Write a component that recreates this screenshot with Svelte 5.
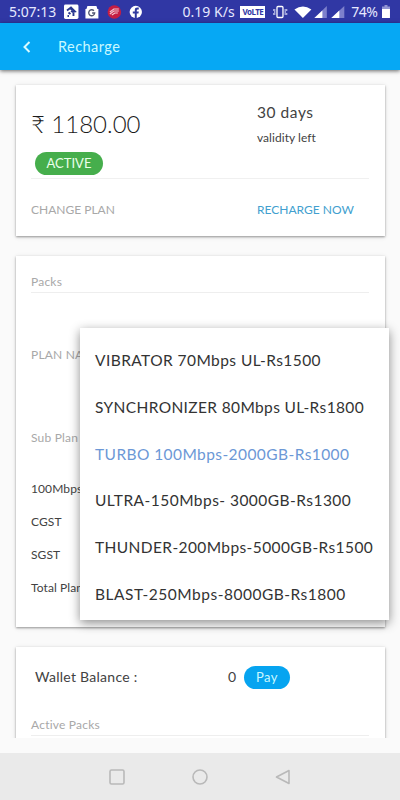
<script lang="ts">
	const plans = [
		{ name: 'VIBRATOR 70Mbps UL-Rs1500', spacing: 0.43 },
		{ name: 'SYNCHRONIZER 80Mbps UL-Rs1800', spacing: 0.36 },
		{ name: 'TURBO 100Mbps-2000GB-Rs1000', spacing: 0.42 },
		{ name: 'ULTRA-150Mbps- 3000GB-Rs1300', spacing: 0.46 },
		{ name: 'THUNDER-200Mbps-5000GB-Rs1500', spacing: 0.39 },
		{ name: 'BLAST-250Mbps-8000GB-Rs1800', spacing: 0.5 }
	];
	const charges = ['100Mbps', 'CGST', 'SGST', 'Total Plan'];

	let selected = $state(2);
</script>

<div class="screen">
	<div class="status-bar">
		<span class="clock">5:07:13</span>
		<svg class="tray" width="84" height="16" viewBox="0 0 84 16">
			<rect x="1" y="0.500" width="14.500" height="14.500" rx="1.500" fill="#fff" />
			<path d="M4 6.500l4-3 4 4-2 .5-2-1M7 4.500l4 2M5.500 8.500l2 1.500M10.500 9v3M4.500 12h1.500" fill="none" stroke="#28368f" stroke-width="1.900" />
			<path d="M24.500 2h9l1 3h1v9.500h-13V5h1z" fill="#fff" />
			<path d="M31 6.700A3 3 0 1 0 31.800 9H29.200" fill="none" stroke="#4f5470" stroke-width="1.300" />
			<circle cx="51.500" cy="8" r="6.800" fill="#c51d43" />
			<path d="M47 8l4-3h5M47 10l4-3h5M49 11l3-2h3" fill="none" stroke="#f4c7d2" stroke-width="1.200" />
			<circle cx="73" cy="8" r="6.200" fill="#fff" />
			<path d="M72 15V9.500h-2V7.500h2V6q0-2.500 2.500-2.500h1.500v2h-1q-1 0-1 1v1h2l-.3 2H74V15z" fill="#303a9e" />
		</svg>
		<span class="speed">0.19 K/s</span>
		<span class="volte">VoLTE</span>
		<svg class="signals" width="74" height="16" viewBox="0 0 74 16">
			<rect x="4" y="2.500" width="6" height="11" rx="1" fill="none" stroke="#fff" stroke-width="1.300" />
			<path d="M1.800 5v6M12.200 5v6M.2 5v2M.2 9v2M13.800 5v2M13.800 9v2" stroke="#d5d8f5" stroke-width="1" />
			<path d="M21.500 5.500Q30-.5 38.500 5.500L30 14z" fill="#fff" />
			<path d="M41.500 14L54 2v12z" fill="#7d80cc" />
			<path d="M41.500 14L49.500 6.500V14z" fill="#fff" />
			<path d="M58.500 14L71.500 2v12z" fill="#7d80cc" />
			<path d="M58.500 14L66.500 6.500V14z" fill="#fff" />
		</svg>
		<span class="percent">74%</span>
		<svg class="battery" width="8" height="14" viewBox="0 0 8 14">
			<path d="M2.500 0h3v1.500H8V5H0V1.500h2.500z" fill="#9295d4" />
			<path d="M0 4h8v9H0z" fill="#fff" />
		</svg>
	</div>

	<header class="app-bar">
		<svg width="10" height="14" viewBox="0 0 10 14">
			<path d="M7.500 2L2.500 7l5 5" fill="none" stroke="#d9fbff" stroke-width="2" />
		</svg>
		<h1>Recharge</h1>
	</header>

	<main>
		<section class="card balance">
			<div class="summary">
				<div>
					<div class="amount">₹ 1180.00</div>
					<span class="badge">ACTIVE</span>
				</div>
				<div>
					<div class="days">30 days</div>
					<div class="validity">validity left</div>
				</div>
			</div>
			<div class="actions">
				<button class="change">CHANGE PLAN</button>
				<button class="recharge">RECHARGE NOW</button>
			</div>
		</section>

		<section class="card packs">
			<h2 class="section-title">Packs</h2>
			<div class="field plan-name">PLAN NAME</div>
			<div class="field sub-plan">Sub Plan</div>
			<div class="charges">
				{#each charges as charge}
					<div>{charge}</div>
				{/each}
			</div>

			<div class="menu">
				{#each plans as plan, i}
					<button
						class:selected={i === selected}
						style="letter-spacing: {plan.spacing}px"
						onclick={() => (selected = i)}
					>
						{plan.name}
					</button>
				{/each}
			</div>
		</section>

		<section class="card wallet">
			<div class="wallet-row">
				<span class="wallet-label">Wallet Balance :</span>
				<span class="wallet-value">0</span>
				<button class="pay">Pay</button>
			</div>
			<h2 class="section-title">Active Packs</h2>
		</section>
	</main>

	<nav>
		<svg width="16" height="16" viewBox="0 0 16 16">
			<rect x="1" y="1" width="14" height="14" rx="1.500" />
		</svg>
		<svg width="16" height="16" viewBox="0 0 16 16">
			<circle cx="8" cy="8" r="7" />
		</svg>
		<svg width="16" height="16" viewBox="0 0 16 16">
			<path d="M14 1.500v13L1.500 8z" />
		</svg>
	</nav>
</div>

<style>
	:global(body) {
		margin: 0;
	}

	.screen {
		width: 400px;
		height: 800px;
		display: flex;
		flex-direction: column;
		overflow: hidden;
		background: #fafafa;
		color: #424242;
		font-family: Lato, 'Noto Sans', sans-serif;
	}

	button {
		padding: 0;
		border: none;
		background: none;
		font: inherit;
		color: inherit;
		text-align: left;
		white-space: nowrap;
	}

	h1,
	h2 {
		margin: 0;
		font-weight: 400;
	}

	.status-bar {
		flex: none;
		height: 23px;
		padding: 0 10px 0 9px;
		display: flex;
		align-items: center;
		background: #3037a4;
		color: #e6e8ff;
		font: 14px/24px 'Noto Sans', sans-serif;
		white-space: nowrap;
	}

	.clock {
		width: 54px;
		letter-spacing: -0.05px;
	}

	.tray {
		margin-right: 36px;
	}

	.speed {
		width: 58px;
	}

	.volte {
		width: 25px;
		height: 12px;
		background: #fff;
		color: #3037a4;
		font: 700 8px/12px 'Noto Sans', sans-serif;
		letter-spacing: -0.5px;
		text-align: center;
	}

	.signals {
		margin: 0 4px 0 8px;
	}

	.percent {
		width: 31px;
		letter-spacing: -0.4px;
	}

	.app-bar {
		position: relative;
		flex: none;
		height: 47px;
		padding-left: 22px;
		display: flex;
		align-items: center;
		gap: 26px;
		background: #06a8f4;
		box-shadow: 0 1px 4px rgba(0, 0, 0, 0.6);
	}

	.app-bar h1 {
		color: #c9f8ff;
		font-size: 14.5px;
		letter-spacing: 0.45px;
	}

	main {
		height: 668px;
		flex: none;
		box-sizing: border-box;
		padding: 15px 15px 0 16px;
		display: flex;
		flex-direction: column;
		gap: 20px;
		overflow: hidden;
	}

	.card {
		flex: none;
		box-sizing: border-box;
		padding: 0 16px 0 15px;
		background: #fff;
		box-shadow:
			0 1px 2px rgba(0, 0, 0, 0.35),
			0 1px 5px rgba(0, 0, 0, 0.12);
	}

	.balance {
		height: 151px;
		padding-top: 16px;
	}

	.summary {
		height: 77px;
		display: grid;
		grid-template-columns: 226px 1fr;
		border-bottom: 1px solid #f0f0f0;
	}

	.amount {
		height: 47px;
		margin-bottom: 4px;
		color: #1b1b1b;
		font-size: 24px;
		font-weight: 300;
		line-height: 46px;
	}

	.badge {
		display: block;
		width: 68px;
		height: 23px;
		margin-left: 4px;
		border-radius: 12px;
		background: #46ae4c;
		color: #eaffea;
		font-size: 13px;
		line-height: 23px;
		text-align: center;
	}

	.days {
		font-size: 15.5px;
		line-height: 23px;
		letter-spacing: 0.55px;
	}

	.validity {
		font-size: 12px;
		line-height: 28px;
		letter-spacing: 0.05px;
	}

	.actions {
		display: grid;
		grid-template-columns: 226px 1fr;
		padding-top: 20px;
		font-size: 12px;
		line-height: 22px;
	}

	.change,
	.field,
	.section-title {
		color: #a8a8a8;
	}

	.recharge {
		color: #429fcf;
	}

	.packs {
		position: relative;
		height: 371px;
		padding-top: 16px;
	}

	.section-title {
		height: 20px;
		border-bottom: 1px solid #eee;
		font-size: 12px;
		line-height: 20px;
		letter-spacing: 0.22px;
	}

	.field {
		font-size: 12px;
		line-height: 20px;
		letter-spacing: 0.2px;
	}

	.plan-name {
		margin-top: 52px;
	}

	.sub-plan {
		margin-top: 63px;
	}

	.charges {
		margin-top: 24px;
		font-size: 12px;
		line-height: 33px;
		letter-spacing: 0.1px;
	}

	.menu {
		position: absolute;
		top: 72px;
		left: 64px;
		z-index: 1;
		width: 309px;
		height: 292px;
		box-sizing: border-box;
		padding: 9px 0 3px 15px;
		display: flex;
		flex-direction: column;
		background: #fff;
		box-shadow: 0 3px 10px rgba(0, 0, 0, 0.45);
	}

	.menu button {
		height: 46.7px;
		color: #333;
		font-size: 15.5px;
	}

	.menu .selected {
		color: #6c98d6;
	}

	.wallet {
		height: 112px;
		padding-top: 19px;
	}

	.wallet-row {
		height: 23px;
		margin-bottom: 26px;
		padding-left: 4px;
		display: flex;
		align-items: center;
		font-size: 14px;
		line-height: 20px;
	}

	.wallet-label,
	.wallet-value {
		padding-bottom: 2px;
	}

	.wallet-label {
		width: 193px;
		letter-spacing: 0.27px;
	}

	.wallet-value {
		width: 16px;
	}

	.pay {
		width: 46px;
		height: 23px;
		border-radius: 12px;
		background: #06a4f0;
		color: #c9f8ff;
		font-size: 13px;
		line-height: 23px;
		letter-spacing: 0.4px;
		text-align: center;
	}

	nav {
		flex: none;
		height: 47px;
		margin-top: auto;
		display: flex;
		align-items: center;
		justify-content: center;
		gap: 67px;
		background: #eaeaea;
	}

	nav svg {
		fill: none;
		stroke: #b9b9b9;
		stroke-width: 1.6;
		stroke-linejoin: round;
	}
</style>
